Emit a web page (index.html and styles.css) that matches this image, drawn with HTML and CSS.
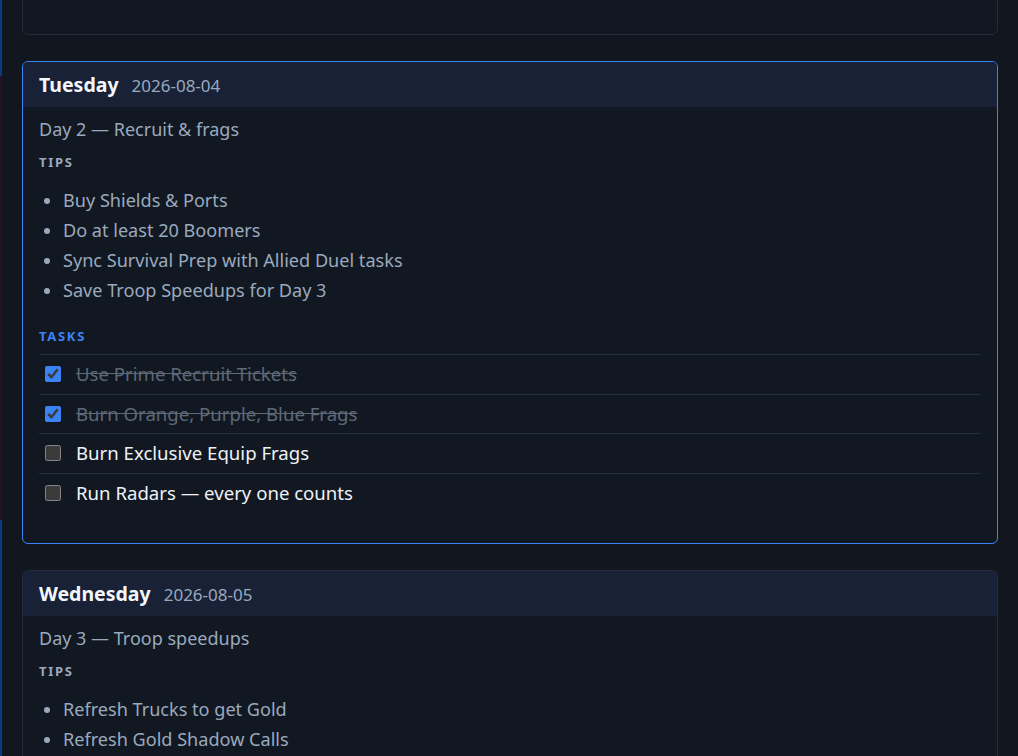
FILE: index.html
```html
<!DOCTYPE html>
<html lang="en">
<head>
    <meta charset="UTF-8">
    <meta name="viewport" content="width=device-width, initial-scale=1.0">
    <title>Event Week Planner</title>
    <link rel="stylesheet" href="styles.css">
</head>
<body>
    <div class="page">
        <div class="edge-strip"></div>

        <main class="board">
            <!-- Monday (scrolled mostly out of view) -->
            <section class="day">
                <header class="day-head">
                    <h2>Monday</h2>
                    <span class="day-date">2026-08-03</span>
                </header>
                <div class="day-body">
                    <p class="day-theme">Day 1 — Radar &amp; construction</p>
                    <h3 class="label">Tips</h3>
                    <ul class="tips">
                        <li>Save Radar tasks for today</li>
                        <li>Upgrade buildings with speedups</li>
                        <li>Collect Drone Parts</li>
                        <li>Check Alliance Duel points</li>
                    </ul>
                    <h3 class="label label-tasks">Tasks</h3>
                    <ul class="tasks">
                        <li class="task done"><input type="checkbox" checked><span>Run all Radar missions</span></li>
                        <li class="task done"><input type="checkbox" checked><span>Use Construction Speedups</span></li>
                        <li class="task"><input type="checkbox"><span>Open Drone Chests</span></li>
                        <li class="task"><input type="checkbox"><span>Claim Stamina</span></li>
                    </ul>
                </div>
            </section>

            <section class="day is-today">
                <header class="day-head">
                    <h2>Tuesday</h2>
                    <span class="day-date">2026-08-04</span>
                </header>
                <div class="day-body">
                    <p class="day-theme">Day 2 — Recruit &amp; frags</p>
                    <h3 class="label">Tips</h3>
                    <ul class="tips">
                        <li>Buy Shields &amp; Ports</li>
                        <li>Do at least 20 Boomers</li>
                        <li>Sync Survival Prep with Allied Duel tasks</li>
                        <li>Save Troop Speedups for Day 3</li>
                    </ul>
                    <h3 class="label label-tasks">Tasks</h3>
                    <ul class="tasks">
                        <li class="task done"><input type="checkbox" checked><span>Use Prime Recruit Tickets</span></li>
                        <li class="task done"><input type="checkbox" checked><span>Burn Orange, Purple, Blue Frags</span></li>
                        <li class="task"><input type="checkbox"><span>Burn Exclusive Equip Frags</span></li>
                        <li class="task"><input type="checkbox"><span>Run Radars — every one counts</span></li>
                    </ul>
                </div>
            </section>

            <section class="day">
                <header class="day-head">
                    <h2>Wednesday</h2>
                    <span class="day-date">2026-08-05</span>
                </header>
                <div class="day-body">
                    <p class="day-theme">Day 3 — Troop speedups</p>
                    <h3 class="label">Tips</h3>
                    <ul class="tips">
                        <li>Refresh Trucks to get Gold</li>
                        <li>Refresh Gold Shadow Calls</li>
                        <li>Train troops with speedups</li>
                    </ul>
                    <h3 class="label label-tasks">Tasks</h3>
                    <ul class="tasks">
                        <li class="task"><input type="checkbox"><span>Use Training Speedups</span></li>
                        <li class="task"><input type="checkbox"><span>Send Gold Trucks</span></li>
                    </ul>
                </div>
            </section>
        </main>
    </div>
</body>
</html>
```

FILE: styles.css
```css
/* Base */
html {
    color-scheme: dark;
}

body {
    margin: 0;
    padding: 0;
    background-color: #12171f;
    color: #e6ebf2;
    font-family: "Noto Sans", "Open Sans", sans-serif;
    overflow: hidden;
}

.page {
    display: flex;
    align-items: stretch;
    min-height: 100vh;
}

/* thin coloured edge of the side rail */
.edge-strip {
    flex: 0 0 2px;
    background: linear-gradient(to bottom,
        #0b3a82 0, #0b3a82 76px,
        #2a0f24 76px, #2a0f24 520px,
        #0b3a82 520px, #0b3a82 100%);
}

.board {
    flex: 1;
    display: flex;
    flex-direction: column;
    gap: 26px;
    padding: 0 20px 40px;
    margin-top: -448px;
}

/* Day card */
.day {
    border: 1px solid #232b3d;
    border-radius: 6px;
    overflow: hidden;
    background-color: #121821;
}

.day.is-today {
    border-color: #3b82f6;
}

.day-head {
    display: flex;
    align-items: baseline;
    gap: 13px;
    padding: 10px 16px;
    background-color: #182136;
}

.day-head h2 {
    margin: 0;
    font-size: 19.5px;
    line-height: 25px;
    font-weight: 700;
    color: #f3f6fa;
}

.day-date {
    font-size: 17px;
    color: #9aa9be;
}

.day-body {
    padding: 9px 16px 31px;
}

.day-theme {
    margin: 0;
    font-size: 18px;
    line-height: 26px;
    color: #9aa9be;
}

.label {
    margin: 11px 0 0;
    font-size: 13px;
    line-height: 18px;
    font-weight: 700;
    letter-spacing: 1.7px;
    text-transform: uppercase;
    color: #9aa9be;
}

.label-tasks {
    margin-top: 22px;
    color: #3b82f6;
}

.tips {
    margin: 14px 0 0;
    padding-left: 24px;
    color: #9aa9be;
    font-size: 18.1px;
    line-height: 30px;
}

.tasks {
    list-style: none;
    margin: 9px 0 0;
    padding: 0;
}

.task {
    display: flex;
    align-items: center;
    gap: 15px;
    padding: 7.25px 6px;
    border-top: 1px solid #252d40;
    font-size: 18.6px;
    line-height: 24px;
    color: #eef2f7;
}

.task input {
    width: 16px;
    height: 16px;
    margin: 0;
    accent-color: #3b82f6;
}

.task.done span {
    color: #5d6878;
    text-decoration: line-through;
}
```
